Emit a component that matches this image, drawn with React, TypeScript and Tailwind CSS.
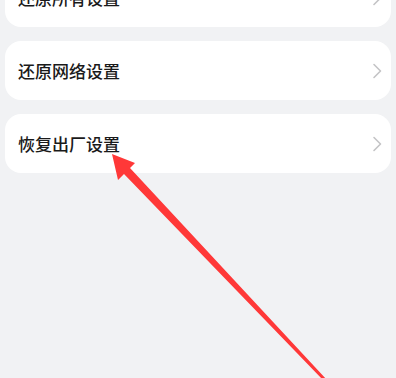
const items = ['还原所有设置', '还原网络设置', '恢复出厂设置'];

const Chevron = () => (
  <svg width="10" height="16" viewBox="0 0 10 16" fill="none">
    <path d="M2 1.5 L8.5 8 L2 14.5" stroke="#c4c4c6" strokeWidth="1.6" strokeLinecap="round" strokeLinejoin="round" />
  </svg>
);

export default function App() {
  return (
    <div className="relative h-[378px] w-[396px] overflow-hidden bg-[#f1f2f4] font-['Noto_Sans_CJK_SC','Noto_Sans',sans-serif]">
      <div className="-mt-[32px] flex flex-col gap-[14px] px-[5px]">
        {items.map((t) => (
          <div key={t} className="flex h-[59px] w-[386px] items-center justify-between rounded-[16px] bg-white pl-[13px] pr-[9px]">
            <span className="text-[17px] font-medium leading-none text-[#1a1a1a]">{t}</span>
            <Chevron />
          </div>
        ))}
      </div>

      {/* red annotation arrow */}
      <svg className="pointer-events-none absolute left-0 top-0" width="396" height="378" viewBox="0 0 396 378">
        <polygon
          points="112,154 135,163 130,168 327,380 323,380 124,174 118,180"
          fill="#ff3838"
        />
      </svg>
    </div>
  );
}
